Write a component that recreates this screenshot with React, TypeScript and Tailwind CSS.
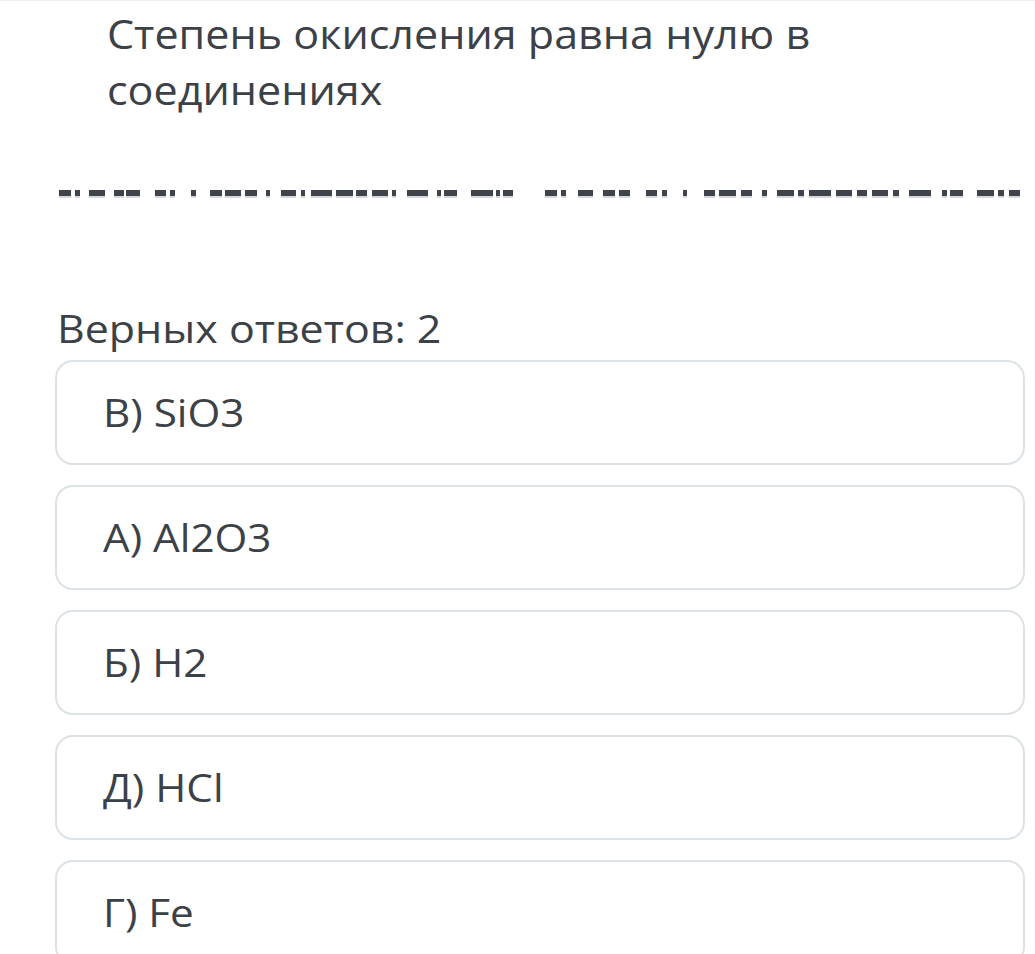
const dashes: [number, number][] = [
  [59, 71], [75, 80], [89, 105], [114, 124], [126, 140], [155, 166], [170, 175], [191, 196],
  [210, 222], [225, 241], [245, 257], [266, 270], [281, 296], [301, 305], [311, 332], [336, 353],
  [356, 367], [372, 388], [392, 396], [407, 428], [437, 441], [444, 457], [471, 493], [496, 500],
  [503, 513],
  [545, 557], [561, 566], [578, 593], [603, 615], [619, 630], [646, 657], [662, 667], [683, 687],
  [704, 715], [719, 736], [741, 752], [762, 767], [777, 794], [798, 804], [809, 831], [836, 852],
  [857, 867], [872, 888], [893, 899], [909, 931], [942, 947], [950, 963], [977, 994], [998, 1004],
  [1009, 1020],
]

const answers = ['В) SiO3', 'А) Al2O3', 'Б) H2', 'Д) HCl', 'Г) Fe']

export default function App() {
  return (
    <div
      className="w-[1035px] h-[954px] overflow-hidden bg-white text-[#3c4147] border-t border-[#eceef0]"
      style={{ fontFamily: '"Open Sans", "Noto Sans", sans-serif' }}
    >
      {/* Question */}
      <h1 className="pl-[107px] pt-[4px] text-[41px] leading-[56px] font-normal">
        <span className="inline-block origin-left scale-x-[1.05]">Степень окисления равна нулю в</span>
        <br />
        <span className="inline-block origin-left scale-x-[1.05]">соединениях</span>
      </h1>

      {/* Blurred placeholder line */}
      <svg width="1035" height="10" className="mt-[71px] block" viewBox="0 0 1035 10">
        {dashes.map(([a, b], i) => (
          <g key={i}>
            <rect x={a} y={4} width={b - a} height={6} fill="#d5d8dc" />
            <rect x={a} y={2} width={b - a} height={6} fill="#3f434a" />
          </g>
        ))}
      </svg>

      <div className="pl-[55px] pr-[10px]">
        <div className="mt-[108px] text-[38px] leading-[44px] pl-[2px]">
          <span className="inline-block origin-left scale-x-[1.13]">Верных ответов: 2</span>
        </div>

        <div className="mt-[10px] flex flex-col gap-[20px]">
          {answers.map((a) => (
            <div
              key={a}
              className="h-[105px] shrink-0 flex items-center pl-[46px] rounded-[18px] border-2 border-[#dce2e5] text-[38px]"
            >
              <span className="inline-block origin-left scale-x-[1.11]">{a}</span>
            </div>
          ))}
        </div>
      </div>
    </div>
  )
}
